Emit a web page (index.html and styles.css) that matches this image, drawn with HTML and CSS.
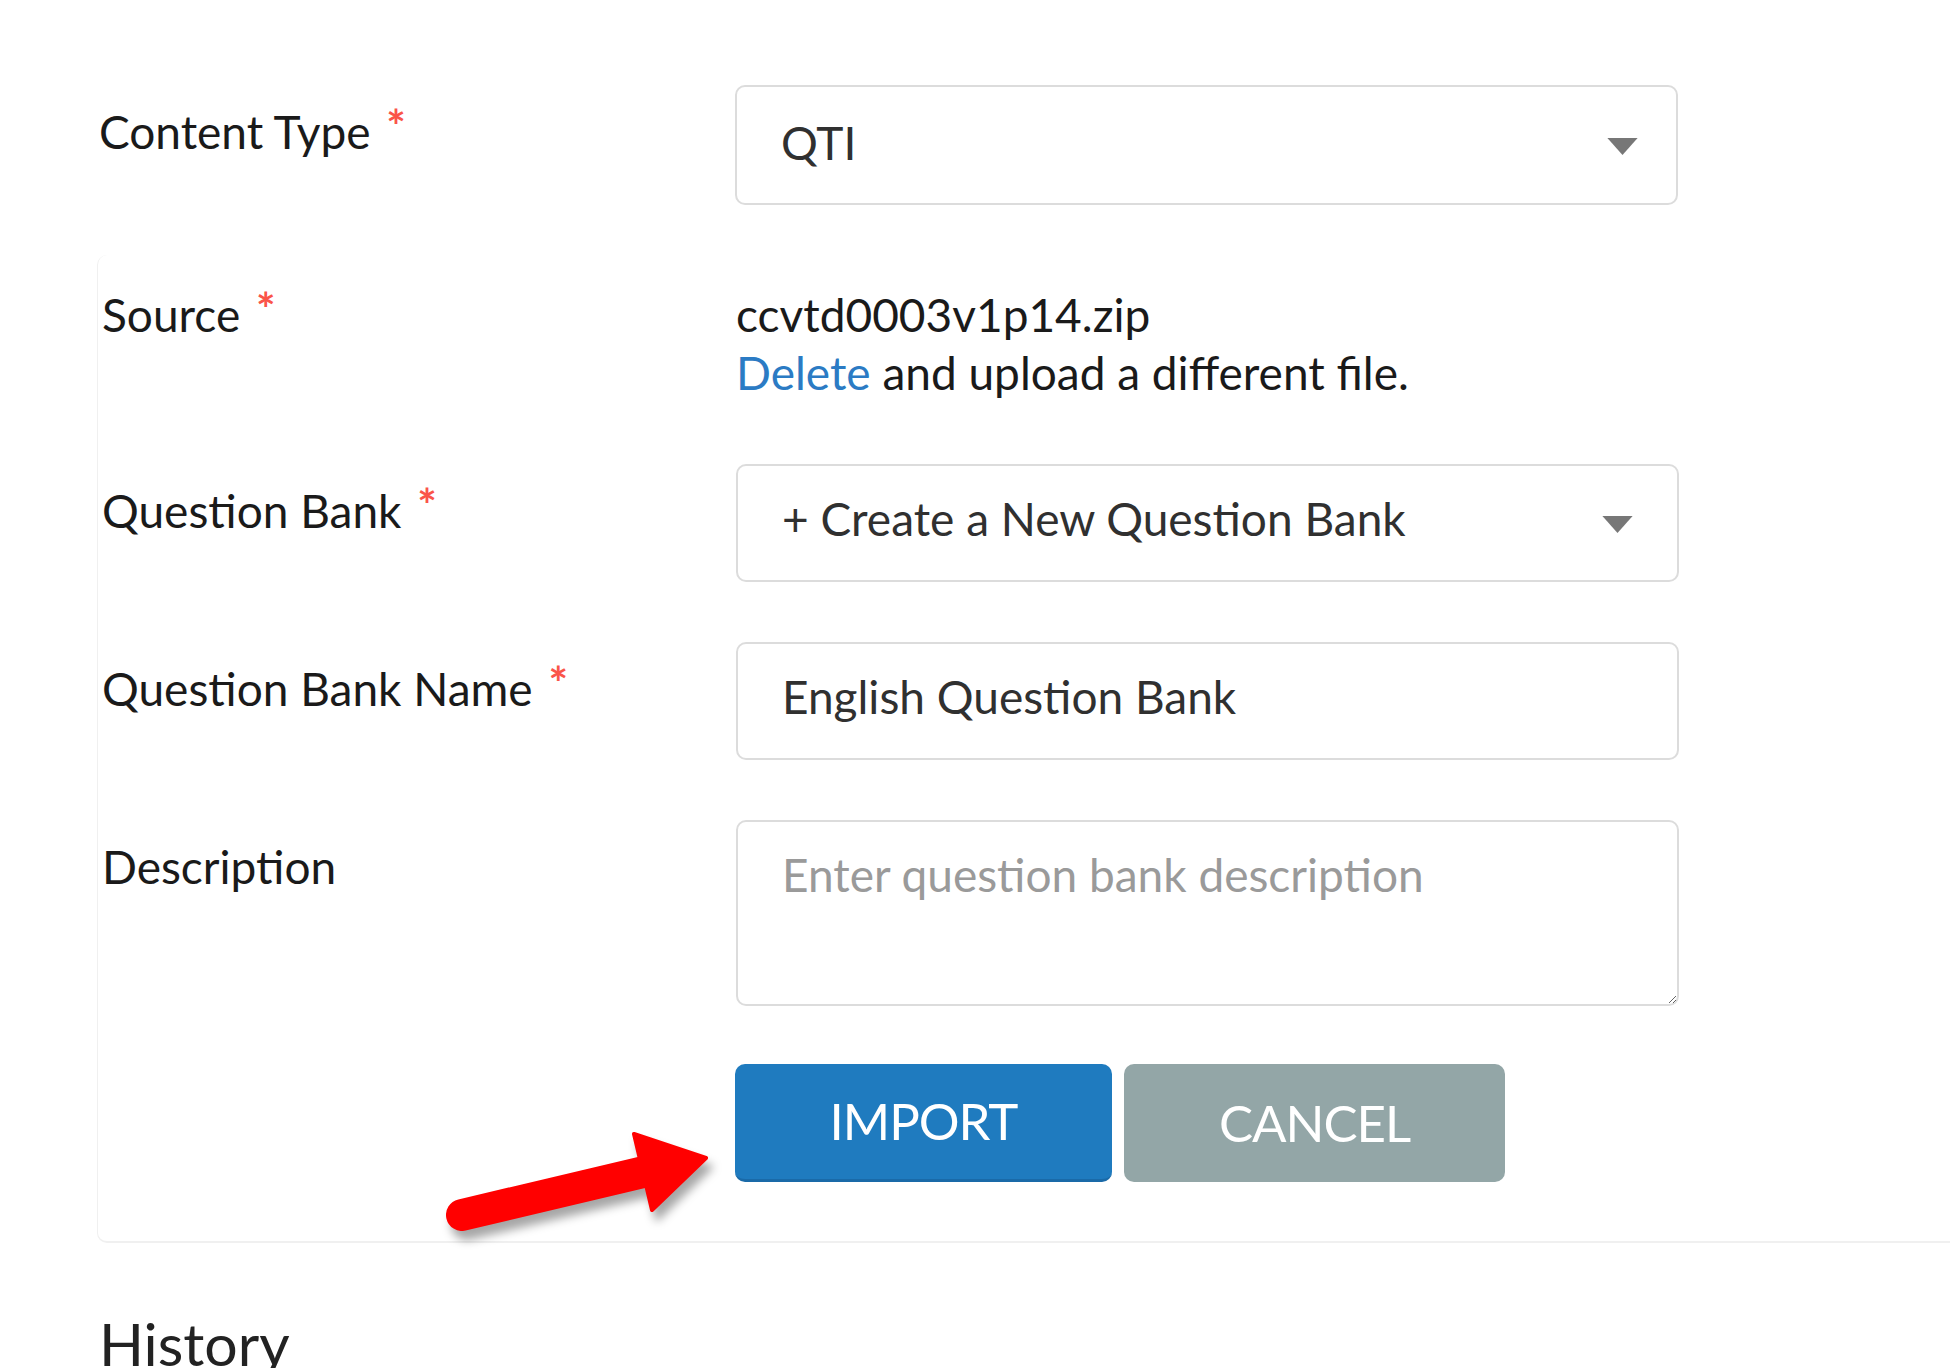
FILE: index.html
```html
<!DOCTYPE html>
<html lang="en">
<head>
  <title>Import Content</title>
  <meta charset="UTF-8" />
<link rel="stylesheet" href="styles.css">
</head>
<body>
<main class="page">
  <div class="field field-top">
    <label class="field-label" for="content-type">Content Type <span class="req">*</span></label>
    <div class="select-wrap">
      <select id="content-type" class="control control-tall">
        <option>QTI</option>
      </select>
      <svg class="caret" viewBox="0 0 32 18"><path d="M0 0 H32 L16 18 Z" /></svg>
    </div>
  </div>

  <section class="card">
    <div class="field field-source">
      <span class="field-label">Source <span class="req">*</span></span>
      <div class="source">
        <div>ccvtd0003v1p14.zip</div>
        <div><a href="#" class="link">Delete</a> and upload a different file.</div>
      </div>
    </div>

    <div class="field">
      <label class="field-label" for="bank">Question Bank <span class="req">*</span></label>
      <div class="select-wrap">
        <select id="bank" class="control">
          <option>+ Create a New Question Bank</option>
        </select>
        <svg class="caret caret-narrow" viewBox="0 0 32 18"><path d="M0 0 H32 L16 18 Z" /></svg>
      </div>
    </div>

    <div class="field">
      <label class="field-label" for="bank-name">Question Bank Name <span class="req">*</span></label>
      <input id="bank-name" class="control" type="text" value="English Question Bank">
    </div>

    <div class="field">
      <label class="field-label" for="desc">Description</label>
      <textarea id="desc" class="control desc" placeholder="Enter question bank description"></textarea>
    </div>

    <div class="field">
      <span></span>
      <div class="actions">
        <button type="button" class="btn btn-import">IMPORT</button>
        <button type="button" class="btn btn-cancel">CANCEL</button>
      </div>
    </div>
  </section>

  <h2 class="history">History</h2>

  <!-- annotation arrow pointing at the import button -->
  <svg class="pointer" viewBox="0 0 300 140">
    <line x1="32" y1="97" x2="222" y2="52" />
    <polygon points="204,16 276,40 222,92" />
  </svg>
</main>
</body>
</html>
```
FILE: styles.css
```css
body {
  margin: 0;
  background-color: #fff;
  font-family: 'Lato', 'Liberation Sans', sans-serif;
  color: #222;
  overflow: hidden;
}

.page {
  position: relative;
  padding: 85px 0 0 97px;
}

.field {
  display: grid;
  grid-template-columns: 634px 943px;
  align-items: start;
  padding-left: 4px;
}

.field-top {
  grid-template-columns: 636px 943px;
  padding-left: 2px;
}

.field-label {
  padding-top: 18px;
  font-size: 46px;
  line-height: 58px;
  color: #1a1a1a;
  white-space: nowrap;
}

.req {
  position: relative;
  top: -6px;
  margin-left: 4px;
  font-size: 46px;
  font-weight: bold;
  color: #fa5449;
}

.control {
  box-sizing: border-box;
  width: 943px;
  height: 118px;
  margin: 0;
  padding: 0 44px 9px;
  border: 2px solid #dcdcdc;
  border-radius: 10px;
  background-color: #fff;
  font-family: 'Lato', 'Liberation Sans', sans-serif;
  font-size: 46px;
  color: #303030;
  outline: none;
}

.control-tall {
  height: 120px;
  padding-bottom: 6px;
}

select.control {
  appearance: none;
  -webkit-appearance: none;
}

.select-wrap {
  position: relative;
}

.caret {
  position: absolute;
  right: 40px;
  top: 50%;
  width: 31px;
  height: 17px;
  margin-top: -7px;
  fill: #777;
}

.caret-narrow {
  right: 46px;
}

.card {
  margin-top: 50px;
  padding: 31px 0 59px;
  border-left: 1px solid #f0f0f0;
  border-bottom: 2px solid #f0f0f0;
  border-radius: 10px 0 0 10px;
  display: flex;
  flex-direction: column;
  gap: 60px;
}

.field-source {
  margin-bottom: 2px;
}

.field-source .field-label {
  padding-top: 0;
}

.source {
  font-size: 46px;
  line-height: 58px;
  color: #1a1a1a;
}

.link {
  color: #2b7bc4;
  text-decoration: none;
}

.desc {
  height: 186px;
  padding-top: 24px;
  padding-bottom: 0;
  line-height: 58px;
  resize: both;
}

.desc::placeholder {
  color: #9a9a9a;
}

.actions {
  display: flex;
  gap: 12px;
  margin-top: -2px;
  margin-left: -1px;
}

.btn {
  height: 118px;
  padding-bottom: 3px;
  border: none;
  border-radius: 10px;
  font-family: 'Lato', 'Liberation Sans', sans-serif;
  font-size: 51px;
  letter-spacing: -1px;
  color: #fff;
  cursor: pointer;
}

.btn-import {
  width: 377px;
  background-color: #1f7bbf;
  border-bottom: 3px solid #1a6aa8;
}

.btn-cancel {
  width: 381px;
  background-color: #93a6a7;
}

.history {
  margin: 66px 0 0 2px;
  font-size: 59px;
  font-weight: normal;
  line-height: 70px;
  color: #222;
}

.pointer {
  position: absolute;
  left: 430px;
  top: 1118px;
  width: 300px;
  height: 140px;
  filter: drop-shadow(5px 9px 5px rgba(0, 0, 0, 0.35));
}

.pointer line {
  stroke: #f00;
  stroke-width: 32;
  stroke-linecap: round;
}

.pointer polygon {
  fill: #f00;
  stroke: #f00;
  stroke-width: 4;
  stroke-linejoin: round;
}
```
